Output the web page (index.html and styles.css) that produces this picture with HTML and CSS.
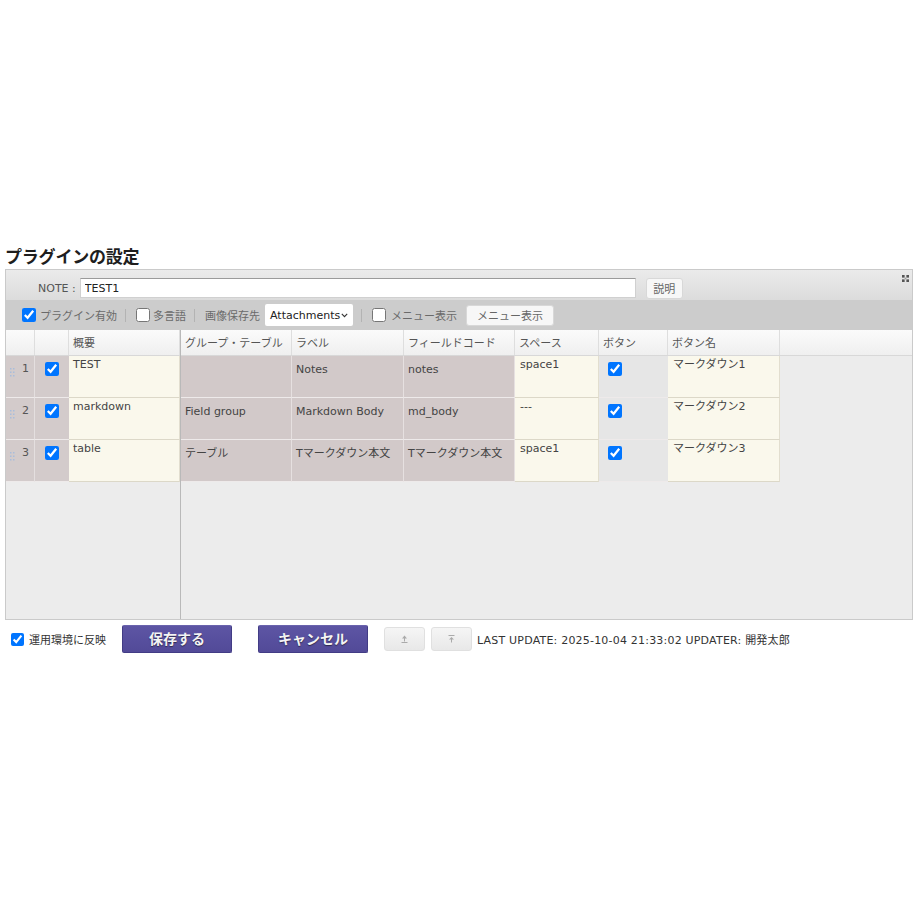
FILE: index.html
```html
<!DOCTYPE html>
<html lang="ja">
<head>
<meta charset="utf-8">
<title>プラグインの設定</title>
<link rel="stylesheet" href="styles.css">
</head>
<body>
<div class="page">
  <h1 class="title">プラグインの設定</h1>
  <div class="panel">
    <div class="bar-note">
      <label class="note-label">NOTE :</label>
      <input class="note-input" type="text" value="TEST1">
      <button class="btn-light btn-desc">説明</button>
      <svg class="expand" width="8" height="8" viewBox="0 0 8 8">
        <rect x="0" y="0" width="3" height="3" fill="#555"/>
        <rect x="5" y="0" width="3" height="3" fill="#555"/>
        <rect x="0" y="5" width="3" height="3" fill="#555"/>
        <rect x="5" y="5" width="3" height="3" fill="#555"/>
        <rect x="3" y="3" width="2" height="2" fill="#999"/>
      </svg>
    </div>
    <div class="bar-tools">
      <input class="chk" type="checkbox" checked>
      <span class="tool-text t-plugin">プラグイン有効</span>
      <span class="sep"></span>
      <input class="chk" type="checkbox">
      <span class="tool-text t-lang">多言語</span>
      <span class="sep"></span>
      <span class="tool-text t-img">画像保存先</span>
      <div class="select"><span>Attachments</span>
        <svg width="7" height="5" viewBox="0 0 7 5"><path d="M0.8 0.8 L3.5 3.6 L6.2 0.8" fill="none" stroke="#333" stroke-width="1.1"/></svg>
      </div>
      <span class="sep"></span>
      <input class="chk" type="checkbox">
      <span class="tool-text t-menu">メニュー表示</span>
      <button class="btn-light btn-menu">メニュー表示</button>
    </div>
    <div class="grid">
      <div class="frozen">
        <div class="row-head cols-left">
          <div class="hc"></div><div class="hc"></div><div class="hc">概要</div>
        </div>
        <div class="row cols-left">
          <div class="c-num"><svg class="handle" width="5" height="9" viewBox="0 0 5 9"><rect x="0" y="0" width="1.5" height="1.5"/><rect x="3" y="0" width="1.5" height="1.5"/><rect x="0" y="3.5" width="1.5" height="1.5"/><rect x="3" y="3.5" width="1.5" height="1.5"/><rect x="0" y="7" width="1.5" height="1.5"/><rect x="3" y="7" width="1.5" height="1.5"/></svg><span>1</span></div>
          <div class="c-chk"><input class="chk" type="checkbox" checked></div>
          <div class="c-text">TEST</div>
        </div>
        <div class="row cols-left">
          <div class="c-num"><svg class="handle" width="5" height="9" viewBox="0 0 5 9"><rect x="0" y="0" width="1.5" height="1.5"/><rect x="3" y="0" width="1.5" height="1.5"/><rect x="0" y="3.5" width="1.5" height="1.5"/><rect x="3" y="3.5" width="1.5" height="1.5"/><rect x="0" y="7" width="1.5" height="1.5"/><rect x="3" y="7" width="1.5" height="1.5"/></svg><span>2</span></div>
          <div class="c-chk"><input class="chk" type="checkbox" checked></div>
          <div class="c-text">markdown</div>
        </div>
        <div class="row cols-left">
          <div class="c-num"><svg class="handle" width="5" height="9" viewBox="0 0 5 9"><rect x="0" y="0" width="1.5" height="1.5"/><rect x="3" y="0" width="1.5" height="1.5"/><rect x="0" y="3.5" width="1.5" height="1.5"/><rect x="3" y="3.5" width="1.5" height="1.5"/><rect x="0" y="7" width="1.5" height="1.5"/><rect x="3" y="7" width="1.5" height="1.5"/></svg><span>3</span></div>
          <div class="c-chk"><input class="chk" type="checkbox" checked></div>
          <div class="c-text">table</div>
        </div>
      </div>
      <div class="scroll">
        <div class="row-head cols-right">
          <div class="hc">グループ・テーブル</div>
          <div class="hc">ラベル</div>
          <div class="hc">フィールドコード</div>
          <div class="hc">スペース</div>
          <div class="hc">ボタン</div>
          <div class="hc">ボタン名</div>
          <div class="hc hc-last"></div>
        </div>
        <div class="row cols-right">
          <div class="c-ro"></div>
          <div class="c-ro">Notes</div>
          <div class="c-ro">notes</div>
          <div class="c-text">space1</div>
          <div class="c-btn"><input class="chk" type="checkbox" checked></div>
          <div class="c-text">マークダウン1</div>
        </div>
        <div class="row cols-right">
          <div class="c-ro">Field group</div>
          <div class="c-ro">Markdown Body</div>
          <div class="c-ro">md_body</div>
          <div class="c-text">---</div>
          <div class="c-btn"><input class="chk" type="checkbox" checked></div>
          <div class="c-text">マークダウン2</div>
        </div>
        <div class="row cols-right">
          <div class="c-ro">テーブル</div>
          <div class="c-ro">Tマークダウン本文</div>
          <div class="c-ro">Tマークダウン本文</div>
          <div class="c-text">space1</div>
          <div class="c-btn"><input class="chk" type="checkbox" checked></div>
          <div class="c-text">マークダウン3</div>
        </div>
      </div>
    </div>
  </div>
  <div class="footer">
    <input class="chk chk-foot" type="checkbox" checked>
    <span class="foot-label">運用環境に反映</span>
    <button class="btn-primary btn-save">保存する</button>
    <button class="btn-primary btn-cancel">キャンセル</button>
    <button class="btn-small btn-up"><svg width="7" height="8" viewBox="0 0 7 8"><path d="M3.5 0.5 L6 3.5 H1 Z" fill="#aaa"/><path d="M3.5 3 V6.5 M0.5 7.5 H6.5" stroke="#aaa" stroke-width="1" fill="none"/></svg></button>
    <button class="btn-small btn-down"><svg width="7" height="8" viewBox="0 0 7 8"><path d="M0.5 0.5 H6.5" stroke="#aaa" stroke-width="1" fill="none"/><path d="M3.5 2 L6 4.5 H1 Z" fill="#aaa"/><path d="M3.5 4 V7.5" stroke="#aaa" stroke-width="1" fill="none"/></svg></button>
    <span class="last-update">LAST UPDATE: 2025-10-04 21:33:02 UPDATER: 開発太郎</span>
  </div>
</div>
</body>
</html>
```

FILE: styles.css
```css
* { box-sizing: border-box; }

body {
  margin: 0;
  background: #fff;
  font-family: "DejaVu Sans", "Noto Sans CJK JP", sans-serif;
  font-size: 11px;
  color: #444;
}

.page {
  padding: 244px 0 0 5px;
}

.title {
  margin: 0;
  height: 25px;
  font: bold 17px/24px "Noto Sans CJK JP", sans-serif;
  letter-spacing: -0.2px;
  color: #1e1e1e;
}

.panel {
  position: relative;
  width: 908px;
  border: 1px solid #cacaca;
  background: #ececec;
}

/* NOTE bar */
.bar-note {
  display: flex;
  align-items: center;
  height: 30px;
  padding: 6px 0 0 32px;
  background: linear-gradient(#ebebeb, #dcdcdc);
}

.note-label {
  margin-right: 4px;
  color: #555;
}

.note-input {
  width: 556px;
  height: 20px;
  padding: 0 4px;
  border: 1px solid #d0d0d0;
  border-top-color: #9a9a9a;
  background: #fff;
  font: 11px "DejaVu Sans", "Noto Sans CJK JP", sans-serif;
  color: #222;
  outline: none;
}

.btn-light {
  height: 21px;
  padding: 0;
  border: 1px solid #d8d8d8;
  border-radius: 3px;
  background: #f7f7f7;
  font: 11px "Noto Sans CJK JP", sans-serif;
  color: #666;
}

.btn-desc {
  width: 37px;
  margin-left: 10px;
}

.expand {
  position: absolute;
  top: 5px;
  right: 3px;
  width: 7px;
  height: 7px;
}

/* tools bar */
.bar-tools {
  display: flex;
  align-items: center;
  height: 30px;
  padding-left: 16px;
  background: #cccccc;
}

.chk {
  width: 14px;
  height: 14px;
  margin: 0;
}

.tool-text {
  font-family: "Noto Sans CJK JP", sans-serif;
  color: #6a6a6a;
  white-space: nowrap;
}

.t-plugin { margin-left: 4px; }
.t-lang { margin-left: 3px; }
.t-menu { margin-left: 5px; }

.sep {
  width: 1px;
  height: 13px;
  margin: 0 10px 0 8px;
  background: #b3b3b3;
}

.t-img + .select { margin-left: 5px; }

.select {
  display: flex;
  align-items: center;
  justify-content: space-between;
  width: 88px;
  height: 22px;
  padding: 0 5px;
  background: #fff;
  border-radius: 2px;
  color: #222;
}

.select svg { margin-top: 1px; }

.btn-menu {
  width: 88px;
  margin-left: 9px;
}

/* grid */
.grid {
  display: flex;
  height: 289px;
  background: #ececec;
}

.frozen {
  width: 175px;
  border-right: 1px solid #b9b9b9;
}

.scroll {
  flex: 1;
}

.cols-left {
  display: grid;
  grid-template-columns: 29px 34px 111px;
}

.cols-right {
  display: grid;
  grid-template-columns: 111px 112px 111px 84px 69px 112px 1fr;
}

.row-head {
  height: 26px;
  background: linear-gradient(#fbfbfb, #efefef);
  border-bottom: 1px solid #d8d8d8;
}

.hc {
  padding-left: 4px;
  border-right: 1px solid #dedede;
  font-family: "Noto Sans CJK JP", sans-serif;
  line-height: 25px;
  color: #555;
  white-space: nowrap;
  overflow: hidden;
}

.hc-last { border-right: none; }

.row {
  height: 42px;
}

.c-num, .c-chk, .c-ro, .c-btn, .c-text {
  border-bottom: 1px solid #eeeaea;
}

.c-num {
  position: relative;
  background: #d3cbcb;
  border-right: 1px solid #e4dfdf;
  text-align: right;
  padding: 6px 5px 0 0;
  line-height: 14px;
  color: #555;
}

.handle {
  position: absolute;
  left: 4px;
  top: 12px;
  fill: #a9bddb;
}

.c-chk {
  background: #d3cbcb;
  padding: 6px 0 0 10px;
}

.c-text {
  background: #faf8ec;
  border-right: 1px solid #e2decf;
  border-bottom-color: #dcd8c8;
  padding: 2px 5px 0;
  line-height: 14px;
  color: #444;
  font-family: "DejaVu Sans", "Noto Sans CJK JP", sans-serif;
  white-space: nowrap;
}

.cols-left .c-text { padding-left: 4px; }

.c-ro {
  background: #d2c9c9;
  border-right: 1px solid #e6e0e0;
  padding: 7px 4px 0;
  line-height: 14px;
  color: #444;
  white-space: nowrap;
  overflow: hidden;
}

.c-btn {
  background: #e6e6e6;
  padding: 6px 0 0 9px;
}

/* footer */
.footer {
  display: flex;
  align-items: center;
  height: 28px;
  margin-top: 5px;
  padding-left: 6px;
}

.chk-foot {
  width: 13px;
  height: 13px;
}

.foot-label {
  margin-left: 5px;
  font-family: "Noto Sans CJK JP", sans-serif;
  color: #333;
}

.btn-primary {
  width: 110px;
  height: 28px;
  padding: 0 0 3px;
  border: 1px solid #423c85;
  border-top-color: #6a63ad;
  border-radius: 2px;
  background: linear-gradient(#5d55a4, #524a98);
  font: bold 14px "Noto Sans CJK JP", sans-serif;
  color: #f4f4f4;
  text-shadow: 0 1px 1px rgba(0, 0, 0, 0.5);
}

.btn-save { margin-left: 16px; }
.btn-cancel { margin-left: 26px; }

.btn-small {
  display: flex;
  align-items: center;
  justify-content: center;
  width: 41px;
  height: 24px;
  padding: 0;
  border: 1px solid #e0e0e0;
  border-radius: 3px;
  background: linear-gradient(#f5f5f5, #e8e8e8);
}

.btn-up { margin-left: 16px; }
.btn-down { margin-left: 6px; }

.last-update {
  margin-left: 5px;
  color: #333;
  letter-spacing: 0.2px;
  white-space: nowrap;
}
```
